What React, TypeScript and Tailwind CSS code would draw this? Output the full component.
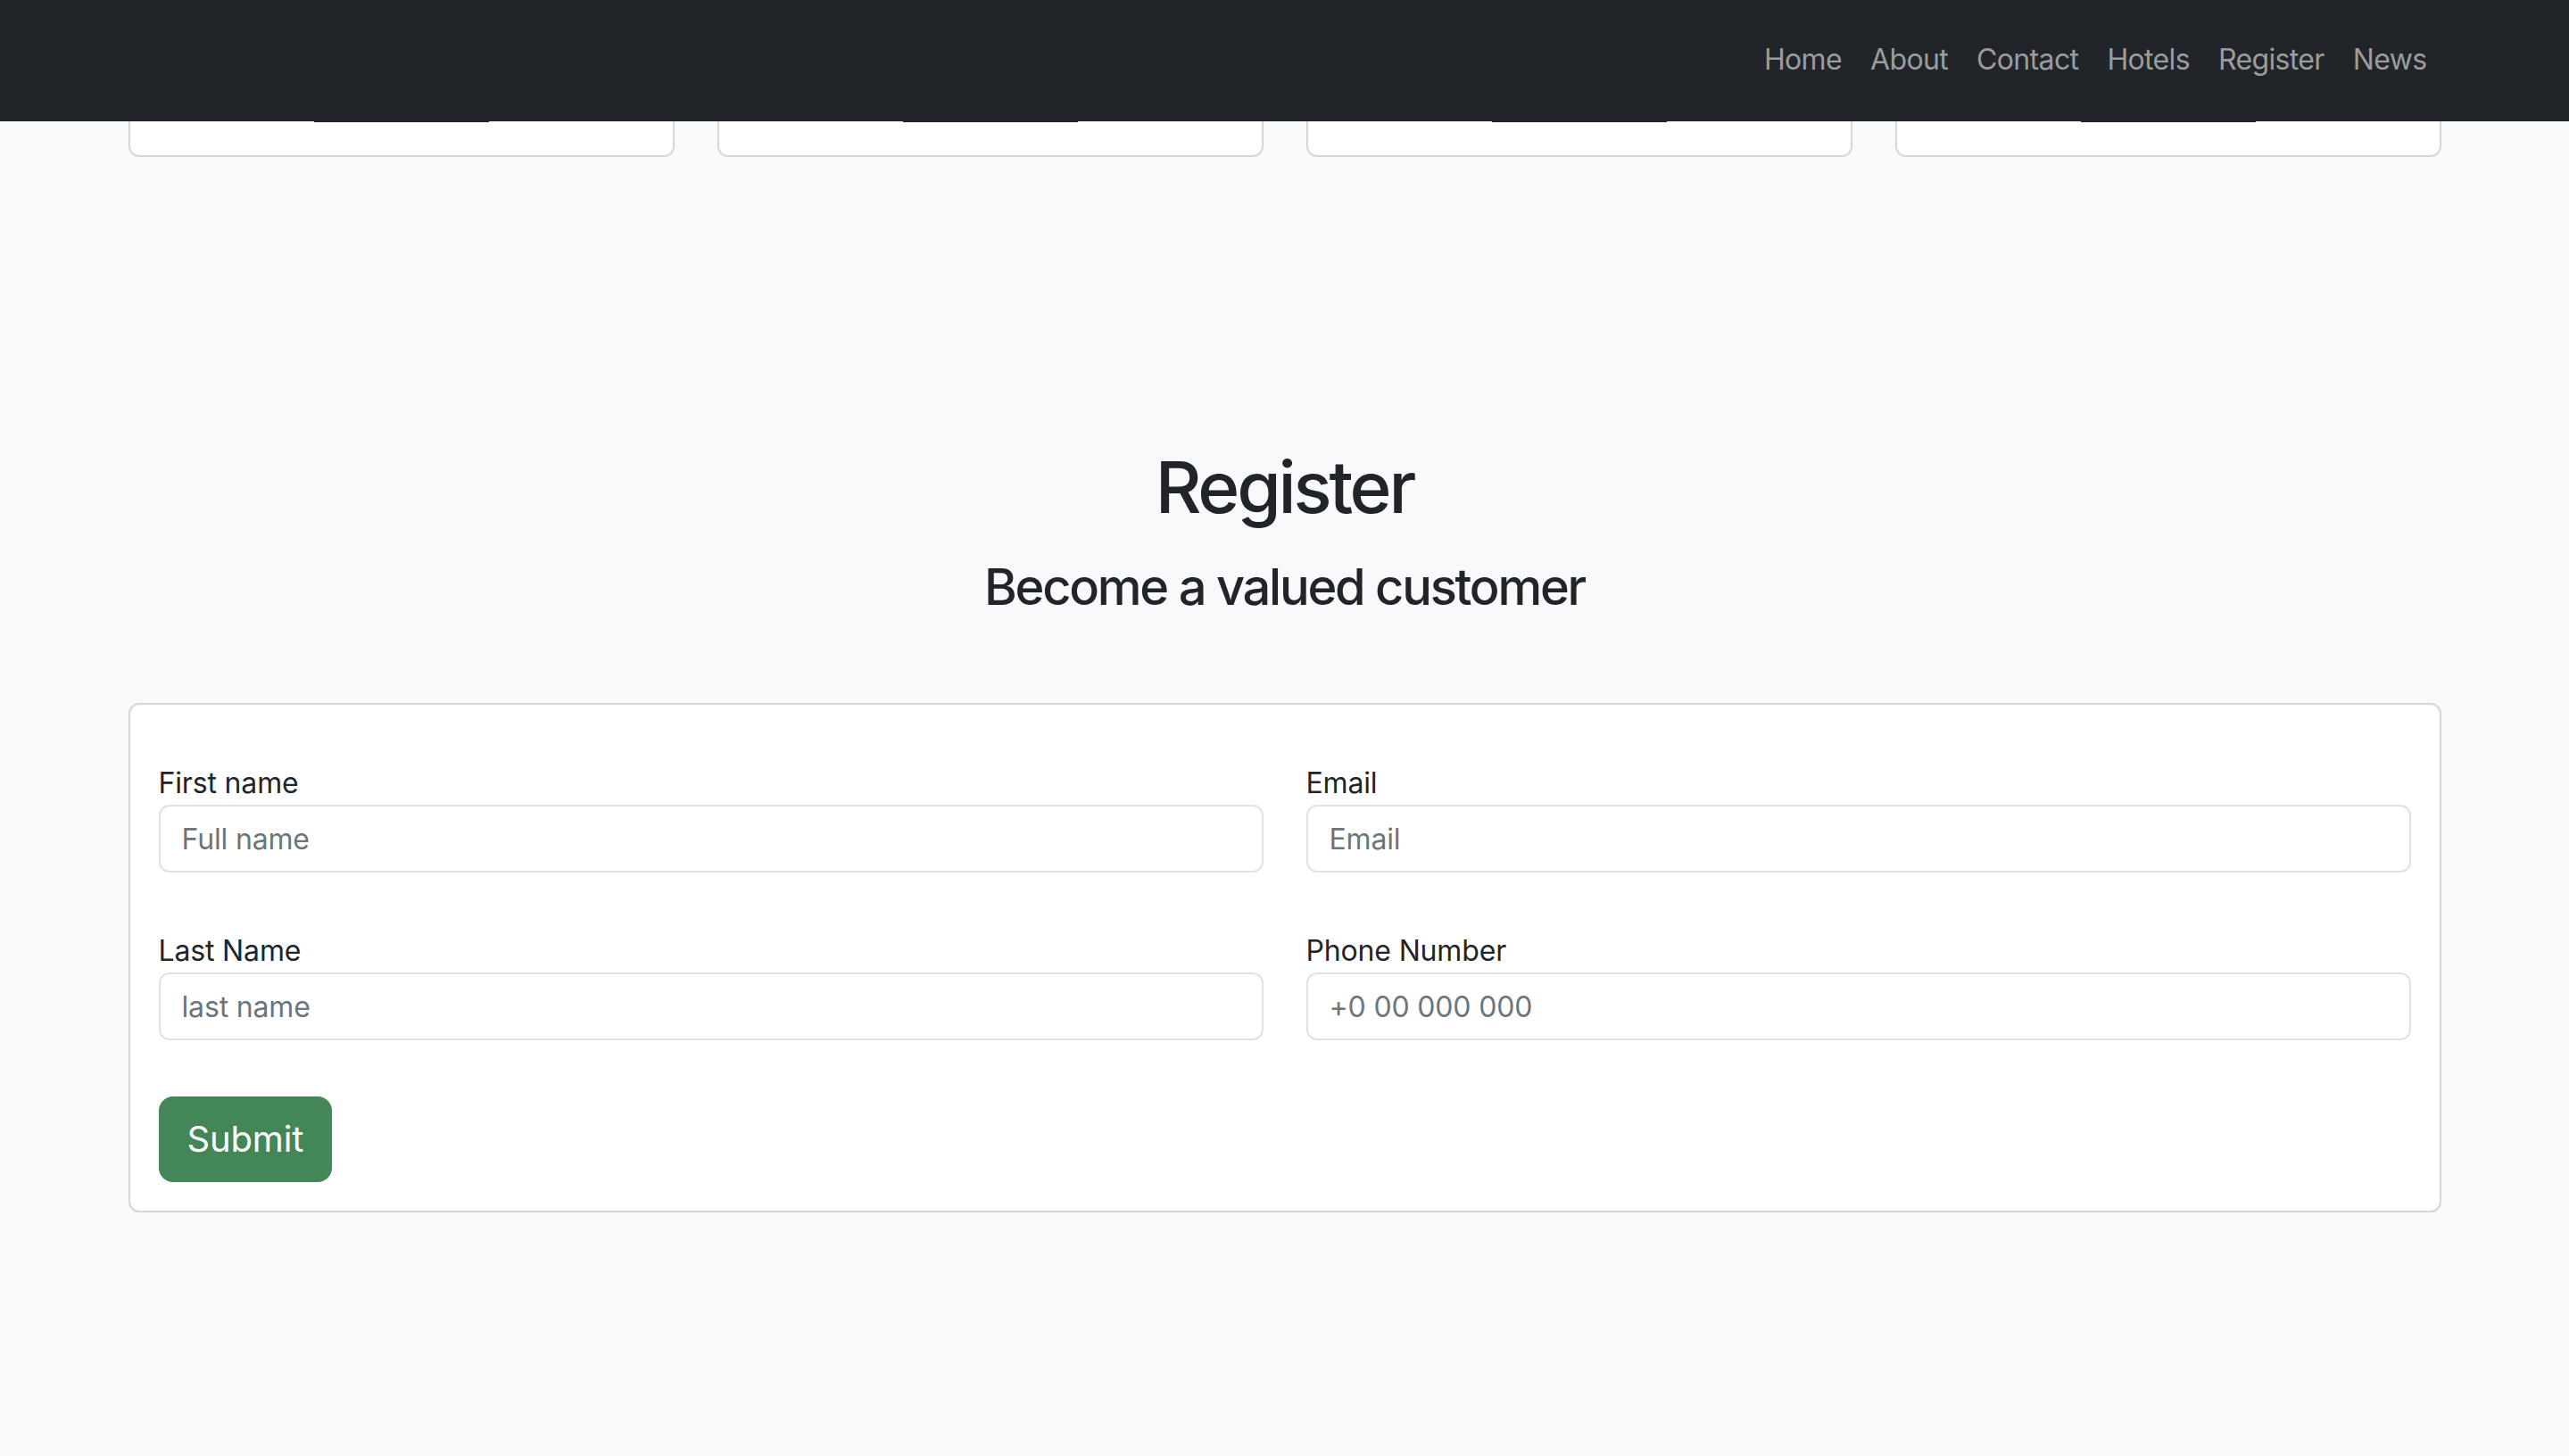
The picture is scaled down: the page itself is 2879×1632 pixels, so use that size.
const links = ['Home', 'About', 'Contact', 'Hotels', 'Register', 'News'];

function Field({ label, placeholder }: { label: string; placeholder: string }) {
  return (
    <div className="flex flex-col pt-[64px]">
      <label className="text-[32px] leading-[48px] text-[#212529]">{label}</label>
      <input
        type="text"
        placeholder={placeholder}
        className="h-[76px] w-full rounded-[12px] border-2 border-[#dee2e6] bg-white px-[24px] text-[32px] text-[#212529] outline-none placeholder:text-[#6c757d]"
      />
    </div>
  );
}

export default function App() {
  return (
    <div className="min-h-[1632px] bg-[#f8f9fa] font-['Inter','Liberation_Sans',sans-serif] tracking-[-0.01em] text-[#212529]">
      {/* fixed navbar over the scrolled page */}
      <nav className="fixed inset-x-0 top-0 z-10 h-[136px] bg-[#212529]">
        <div className="mx-auto flex h-full w-[2640px] items-center justify-end px-[24px] pb-[2px]">
          {links.map((l) => (
            <a key={l} href="#" className="px-[16px] text-[32px] leading-[48px] tracking-[-0.02em] text-[#9a9c9e]">
              {l}
            </a>
          ))}
        </div>
      </nav>

      <div className="mx-auto w-[2640px] px-[24px]">
        {/* hotel cards, mostly scrolled under the navbar */}
        <div className="grid grid-cols-4 gap-x-[48px]">
          {[0, 1, 2, 3].map((i) => (
            <div
              key={i}
              className="flex h-[176px] flex-col items-center justify-end rounded-b-[12px] border-2 border-t-0 border-[#d6d6d6] bg-white pb-[37px]"
            >
              <div className="h-[60px] w-[196px] bg-[#212529]"></div>
            </div>
          ))}
        </div>

        <div className="pt-[322px] text-center">
          <h1 className="text-[80px] font-medium leading-[96px] tracking-[-0.04em]">Register</h1>
          <h3 className="mt-[31px] text-[56px] font-medium leading-[67px] tracking-[-0.04em]">
            Become a valued customer
          </h3>
        </div>

        <form className="mt-[96px] rounded-[12px] border-2 border-[#d6d6d6] bg-white px-[32px] pb-[32px]">
          <div className="grid grid-cols-2 gap-x-[48px]">
            <Field label="First name" placeholder="Full name" />
            <Field label="Email" placeholder="Email" />
            <Field label="Last Name" placeholder="last name" />
            <Field label="Phone Number" placeholder="+0 00 000 000" />
          </div>
          <button
            type="button"
            className="mt-[63px] h-[96px] rounded-[16px] bg-[#438759] px-[32px] text-[40px] leading-[60px] text-white"
          >
            Submit
          </button>
        </form>
      </div>
    </div>
  );
}
